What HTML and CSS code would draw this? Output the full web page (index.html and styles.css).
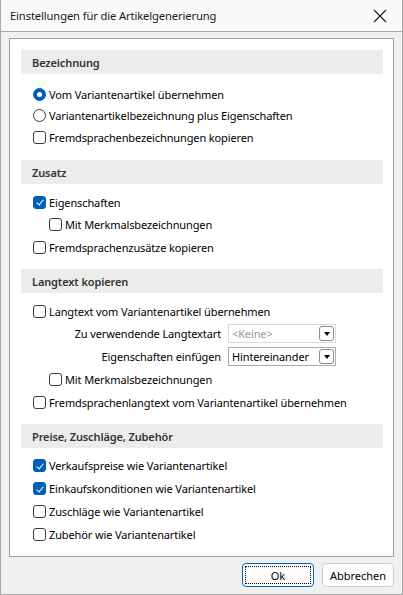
FILE: index.html
```html
<!DOCTYPE html>
<html lang="de">
<head>
<meta charset="utf-8">
<title>Einstellungen für die Artikelgenerierung</title>
<link rel="stylesheet" href="styles.css">
</head>
<body>
<div class="window">
  <div class="titlebar">
    <span class="title">Einstellungen für die Artikelgenerierung</span>
    <span class="close">
      <svg width="14" height="14" viewBox="0 0 14 14"><path d="M1 1 L13 13 M13 1 L1 13" stroke="#1a1a1a" stroke-width="1.1" fill="none"/></svg>
    </span>
  </div>
  <div class="content">
    <div class="panel">
      <section class="section s1">
        <div class="head">Bezeichnung</div>
        <div class="rows">
          <div class="row r-radio1"><span class="radio on"></span><span class="lbl">Vom Variantenartikel übernehmen</span></div>
          <div class="row r-radio2"><span class="radio"></span><span class="lbl">Variantenartikelbezeichnung plus Eigenschaften</span></div>
          <div class="row"><span class="cb"></span><span class="lbl">Fremdsprachenbezeichnungen kopieren</span></div>
        </div>
      </section>
      <section class="section s2">
        <div class="head">Zusatz</div>
        <div class="rows">
          <div class="row r-first"><span class="cb on"></span><span class="lbl">Eigenschaften</span></div>
          <div class="row sub"><span class="cb"></span><span class="lbl">Mit Merkmalsbezeichnungen</span></div>
          <div class="row"><span class="cb"></span><span class="lbl">Fremdsprachenzusätze kopieren</span></div>
        </div>
      </section>
      <section class="section s3">
        <div class="head">Langtext kopieren</div>
        <div class="rows">
          <div class="row r-first"><span class="cb"></span><span class="lbl">Langtext vom Variantenartikel übernehmen</span></div>
          <div class="row field">
            <span class="flabel">Zu verwendende Langtextart</span>
            <span class="combo disabled"><span class="cval">&lt;Keine&gt;</span><span class="dd"><span class="tri"></span></span></span>
          </div>
          <div class="row field">
            <span class="flabel">Eigenschaften einfügen</span>
            <span class="combo"><span class="cval">Hintereinander</span><span class="dd"><span class="tri"></span></span></span>
          </div>
          <div class="row sub"><span class="cb"></span><span class="lbl">Mit Merkmalsbezeichnungen</span></div>
          <div class="row"><span class="cb"></span><span class="lbl">Fremdsprachenlangtext vom Variantenartikel übernehmen</span></div>
        </div>
      </section>
      <section class="section s4">
        <div class="head">Preise, Zuschläge, Zubehör</div>
        <div class="rows">
          <div class="row"><span class="cb on"></span><span class="lbl">Verkaufspreise wie Variantenartikel</span></div>
          <div class="row"><span class="cb on"></span><span class="lbl">Einkaufskonditionen wie Variantenartikel</span></div>
          <div class="row"><span class="cb"></span><span class="lbl">Zuschläge wie Variantenartikel</span></div>
          <div class="row"><span class="cb"></span><span class="lbl">Zubehör wie Variantenartikel</span></div>
        </div>
      </section>
    </div>
    <div class="buttons">
      <button class="btn default"><span class="focus">Ok</span></button>
      <button class="btn">Abbrechen</button>
    </div>
  </div>
</div>
</body>
</html>
```
FILE: styles.css
```css
* { box-sizing: border-box; }
html, body { margin: 0; padding: 0; }
body {
  font-family: "Noto Sans", "Open Sans", sans-serif;
  font-size: 11px;
  letter-spacing: -0.12px;
  color: #000;
  background: #f0f0f0;
}
.window {
  width: 403px;
  height: 595px;
  border-right: 1px solid #a9a9a9;
  border-left: 1px solid #a9a9a9;
  border-bottom: 1px solid #a9a9a9;
  background: #f0f0f0;
  display: flex;
  flex-direction: column;
}
.titlebar {
  height: 32px;
  flex: none;
  background: #f9f9f9;
  border-bottom: 1px solid #a9a9a9;
  display: flex;
  align-items: center;
  justify-content: space-between;
  padding: 0 15px 0 9px;
}
.title { color: #1a1a1a; font-size: 11.2px; }
.close { display: flex; width: 14px; height: 14px; }
.content {
  flex: 1;
  display: flex;
  flex-direction: column;
  padding: 6px 8px 0 8px;
}
.panel {
  background: #fff;
  border: 1px solid #a0a0a0;
  height: 519px;
  padding: 11px 10px 0 11px;
}
.head {
  height: 24px;
  background: #ececec;
  color: #333;
  font-weight: 600;
  padding-left: 11px;
  display: flex;
  align-items: center;
}
.section { margin-bottom: 10px; }
.s1 { margin-bottom: 11px; }
.rows { padding-top: 7px; padding-left: 12px; }
.s1 .rows { padding-top: 9px; }
.s4 .rows { padding-top: 6px; }
.row {
  height: 23px;
  display: flex;
  align-items: center;
}
.r-first, .r-radio1 { height: 22px; }
.r-radio2 { height: 21px; }
.sub { padding-left: 16px; }
.lbl { margin-left: 3px; white-space: nowrap; }
.cb {
  width: 13px;
  height: 13px;
  border: 1px solid #3c3c3c;
  border-radius: 3px;
  background: #fff;
  flex: none;
  position: relative;
}
.cb.on {
  background: #005fb8;
  border-color: #005fb8;
}
.cb.on::after {
  content: "";
  position: absolute;
  left: 3.5px;
  top: 1.5px;
  width: 3px;
  height: 6px;
  border-right: 1px solid #fff;
  border-bottom: 1px solid #fff;
  transform: rotate(40deg);
}
.radio {
  width: 13px;
  height: 13px;
  border: 1px solid #3c3c3c;
  border-radius: 50%;
  background: #fff;
  flex: none;
  display: flex;
  align-items: center;
  justify-content: center;
}
.radio.on {
  background: #005fb8;
  border-color: #005fb8;
}
.radio.on::after {
  content: "";
  width: 5px;
  height: 5px;
  border-radius: 50%;
  background: #fff;
}
.field { padding-left: 0; }
.flabel {
  width: 188px;
  text-align: right;
  white-space: nowrap;
}
.combo {
  margin-left: 7px;
  width: 108px;
  height: 19px;
  border: 1px solid #ababab;
  background: #fff;
  display: flex;
  align-items: center;
  justify-content: space-between;
  padding: 0 1px 0 3px;
}
.combo.disabled { border-color: #d9d9d9; }
.combo.disabled .cval { color: #999; }
.dd {
  width: 15px;
  height: 15px;
  border: 1px solid #8c8c8c;
  border-radius: 3px;
  background: #fff;
  display: flex;
  align-items: center;
  justify-content: center;
}
.tri {
  width: 0;
  height: 0;
  border-left: 3.5px solid transparent;
  border-right: 3.5px solid transparent;
  border-top: 4px solid #000;
  margin-top: 1px;
}
.buttons {
  display: flex;
  justify-content: flex-end;
  gap: 8px;
  padding-top: 6px;
}
.btn {
  width: 72px;
  height: 24px;
  font-family: inherit;
  font-size: 11px;
  color: #000;
  background: #fdfdfd;
  border: 1px solid #d0d0d0;
  border-radius: 4px;
  padding: 0;
  display: flex;
  align-items: center;
  justify-content: center;
}
.btn.default {
  border-color: #0067c0;
  padding: 2px;
}
.focus {
  width: 100%;
  height: 100%;
  border: 1px dotted #000;
  display: flex;
  align-items: center;
  justify-content: center;
}
```
